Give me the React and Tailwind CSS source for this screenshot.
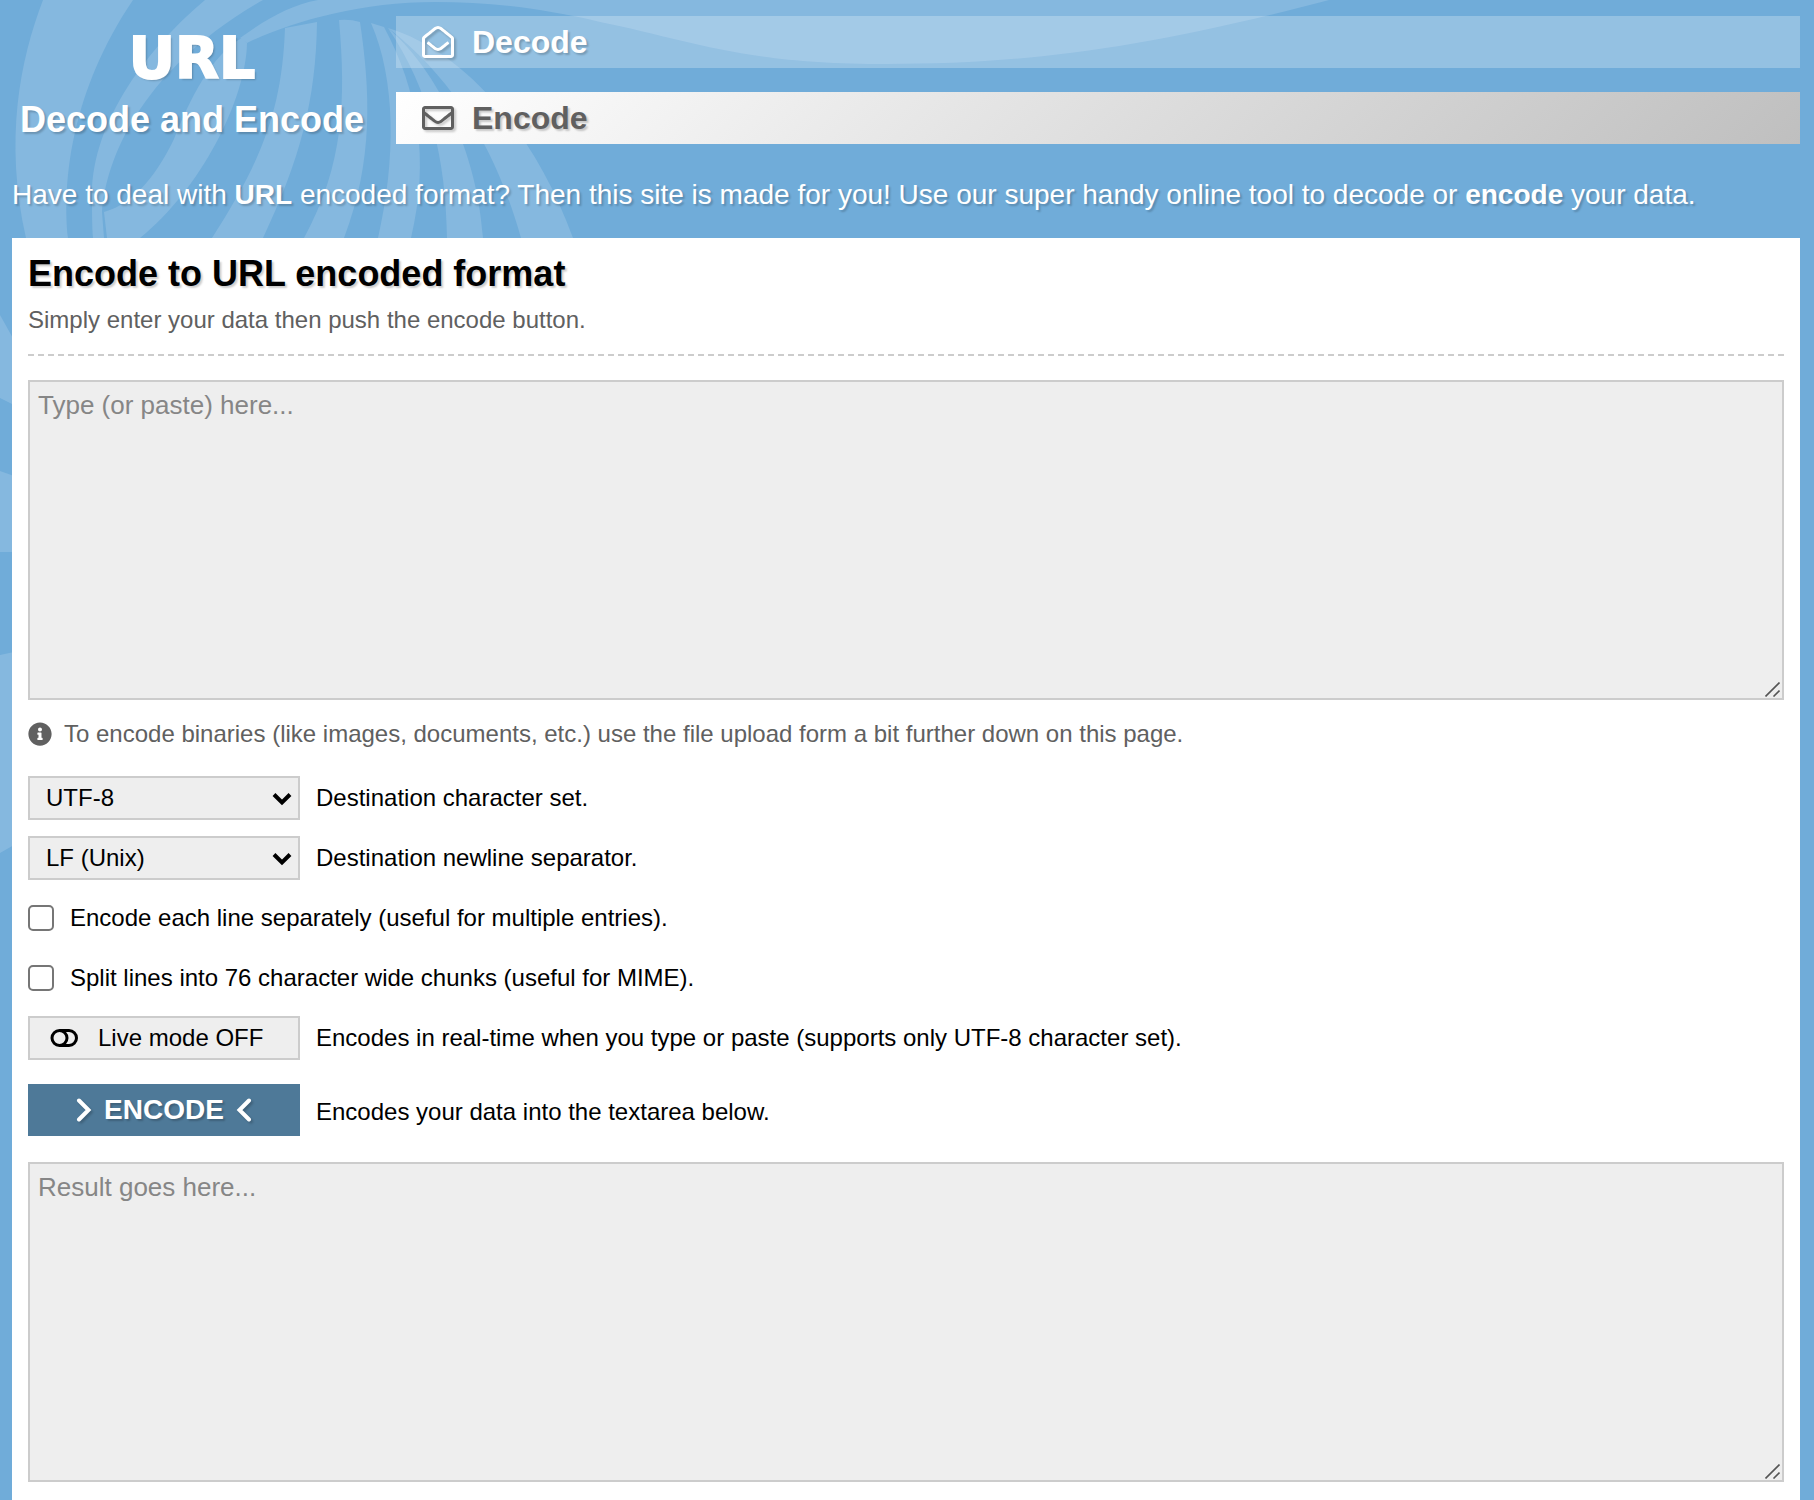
import React, { useState } from "react";
import { FaInfoCircle, FaRegEnvelope, FaRegEnvelopeOpen } from "react-icons/fa";

/* ---------- Fondo decorativo ---------- */
function Swirl() {
  return (
    <svg
      className="pointer-events-none absolute left-0 top-0 -z-10"
      width="1400"
      height="860"
      viewBox="0 0 1400 860"
      fill="#85b8df"
      aria-hidden="true"
    >
      <path d="M43 0C20 60 4 140 26 238H68C62 180 72 90 133 0Z" />
      <path d="M205 0C150 46 92 120 92 195C92 212 92 226 93 238H104L102 212C106 160 140 70 263 0Z" />
      <path d="M104 212C136 203 158 172 174 139C189 101 212 54 242 38L247 43C246 100 200 190 140 238H107Z" />
      <path d="M240 38C265 20 290 5 318 0H1329C1140 50 1020 64 887 64C740 64 690 40 600 22C540 8 490 2 435 2C360 2 290 22 247 43Z" />
      <path d="M285 28L317 22C316 100 300 160 263 238H212C262 160 282 110 285 28Z" />
      <path d="M339 20Q350 19 360 22C370 90 374 160 344 238H304C344 165 346 100 339 20Z" />
      <path d="M371 23L384 27C418 90 430 160 411 238H378C396 160 396 80 371 23Z" />
      <path d="M388 28C430 64 476 140 483 238H447C446 160 430 90 388 28Z" />
      <path d="M388 28C455 48 530 120 573 238H521C496 150 455 80 388 28Z" />
      <path d="M0 315L14 340V405L0 398Z" />
      <path d="M0 471L14 476V552H0Z" />
      <path d="M0 655L14 652V845L0 853Z" />
    </svg>
  );
}

/* ---------- Iconos ---------- */
function ToggleOffIcon() {
  return (
    <svg width="28" height="18" viewBox="0 0 28 18" fill="none" stroke="currentColor" strokeWidth="3" aria-hidden="true">
      <circle cx="9.5" cy="9" r="7.5" />
      <path d="M9.5 1.5H19A7.5 7.5 0 0 1 19 16.5H9.5" />
    </svg>
  );
}

function Chevron({ d }) {
  return (
    <svg
      className="drop-shadow-[2px_2px_1px_rgba(0,0,0,0.2)]"
      width="16"
      height="24"
      viewBox="0 0 16 24"
      fill="none"
      stroke="currentColor"
      strokeWidth="4"
      strokeLinecap="round"
      aria-hidden="true"
    >
      <path d={d} />
    </svg>
  );
}

/* ---------- Controles ---------- */
function TextBox({ id, label, placeholder, value, onChange, readOnly }) {
  return (
    <div className="relative">
      <textarea
        id={id}
        aria-label={label}
        placeholder={placeholder}
        value={value}
        onChange={onChange}
        readOnly={readOnly}
        className="block h-80 w-full resize-none border-2 border-[#cccccc] bg-[#eeeeee] px-2 py-1 text-[26px] leading-[38px] text-black outline-none placeholder:text-[#868686]"
      />
      <svg
        className="pointer-events-none absolute bottom-[3px] right-1"
        width="15"
        height="15"
        viewBox="0 0 15 15"
        stroke="#555555"
        strokeWidth="1.6"
        aria-hidden="true"
      >
        <path d="M0.5 14.5L14.5 0.5M8.5 14.5L14.5 8.5" />
      </svg>
    </div>
  );
}

function SelectRow({ id, options, children }) {
  return (
    <div className="flex items-center gap-4">
      <div className="relative w-[272px]">
        <select
          id={id}
          className="h-11 w-full appearance-none border-2 border-[#cccccc] bg-[#eeeeee] px-4 text-2xl leading-8 text-black outline-none"
        >
          {options.map((o) => (
            <option key={o}>{o}</option>
          ))}
        </select>
        <svg
          className="pointer-events-none absolute right-2 top-4"
          width="20"
          height="14"
          viewBox="0 0 20 14"
          fill="none"
          stroke="#000000"
          strokeWidth="4"
          aria-hidden="true"
        >
          <path d="M2 2.5L10 10.5L18 2.5" />
        </svg>
      </div>
      <label htmlFor={id}>{children}</label>
    </div>
  );
}

function CheckRow({ id, children }) {
  return (
    <div className="flex h-11 items-center gap-4">
      <input
        id={id}
        type="checkbox"
        className="size-[26px] appearance-none rounded-[5px] border-2 border-[#767676] bg-white checked:bg-[#4e7998]"
      />
      <label htmlFor={id}>{children}</label>
    </div>
  );
}

/* ------------------------ Página ------------------------ */
export default function App() {
  const [text, setText] = useState("");
  const [result, setResult] = useState("");
  const [live, setLive] = useState(false);

  const onType = (e) => {
    setText(e.target.value);
    if (live) setResult(encodeURIComponent(e.target.value));
  };

  return (
    <div
      className="relative isolate flex min-h-screen flex-col overflow-hidden bg-[#70acd9] pl-3 pr-3.5 pt-4 text-2xl leading-8 text-black"
      style={{ fontFamily: "'Liberation Sans', Arial, sans-serif" }}
    >
      <Swirl />

      <header className="flex gap-6 text-white">
        <a
          href="#"
          className="flex w-[360px] shrink-0 flex-col items-center gap-3.5 pt-3.5 [text-shadow:2px_2px_2px_rgba(0,0,0,0.2)]"
        >
          <span
            className="text-[57px] font-bold leading-[56px] [-webkit-text-stroke:2px_#ffffff]"
            style={{ fontFamily: "'DejaVu Sans', sans-serif" }}
          >
            URL
          </span>
          <span className="text-4xl font-bold leading-10">Decode and Encode</span>
        </a>

        <nav className="flex grow flex-col gap-6 text-[32px] font-bold [text-shadow:2px_2px_2px_rgba(0,0,0,0.2)]">
          <a href="#decode" className="flex h-[52px] items-center gap-[18px] bg-white/25 px-[26px]">
            <FaRegEnvelopeOpen className="size-8 drop-shadow-[2px_2px_1px_rgba(0,0,0,0.2)]" />
            Decode
          </a>
          <a
            href="#encode"
            className="flex h-[52px] items-center gap-[18px] bg-[linear-gradient(135deg,#ffffff,#bfbfbf)] px-[26px] text-[#606060]"
          >
            <FaRegEnvelope className="size-8 drop-shadow-[2px_2px_1px_rgba(0,0,0,0.2)]" />
            Encode
          </a>
        </nav>
      </header>

      <p className="mb-[23px] mt-[31px] text-[28px] leading-10 text-white [text-shadow:2px_2px_2px_rgba(0,0,0,0.2)]">
        Have to deal with <b>URL</b> encoded format? Then this site is made for you! Use our super handy online tool to
        decode or <b>encode</b> your data.
      </p>

      <main className="grow bg-white px-4 pt-4">
        <h1 className="text-4xl font-bold leading-10 [text-shadow:2px_2px_2px_rgba(0,0,0,0.2)]">
          Encode to URL encoded format
        </h1>
        <p className="mt-2.5 border-b-2 border-dashed border-[#cccccc] pb-[18px] text-[#606060]">
          Simply enter your data then push the encode button.
        </p>

        <form className="mt-6" onSubmit={(e) => e.preventDefault()}>
          <TextBox id="input" label="Data to encode" placeholder="Type (or paste) here..." value={text} onChange={onType} />

          <p className="mb-6 mt-4 flex items-center gap-3 leading-9 text-[#606060]">
            <FaInfoCircle className="size-6 shrink-0" />
            To encode binaries (like images, documents, etc.) use the file upload form a bit further down on this page.
          </p>

          <div className="flex flex-col gap-4">
            <SelectRow id="charset" options={["UTF-8", "ASCII", "ISO-8859-1", "UTF-16"]}>
              Destination character set.
            </SelectRow>
            <SelectRow id="separator" options={["LF (Unix)", "CRLF (Windows)"]}>
              Destination newline separator.
            </SelectRow>
            <CheckRow id="lines">Encode each line separately (useful for multiple entries).</CheckRow>
            <CheckRow id="chunks">Split lines into 76 character wide chunks (useful for MIME).</CheckRow>
            <div className="flex items-center gap-4">
              <button
                id="live"
                type="button"
                onClick={() => setLive(!live)}
                className="flex h-11 w-[272px] items-center gap-5 border-2 border-[#cccccc] bg-[#eeeeee] px-5"
              >
                <ToggleOffIcon />
                {live ? "Live mode ON" : "Live mode OFF"}
              </button>
              <label htmlFor="live">
                Encodes in real-time when you type or paste (supports only UTF-8 character set).
              </label>
            </div>
          </div>

          <div className="mb-[26px] mt-6 flex items-end gap-4">
            <button
              id="submit"
              type="submit"
              onClick={() => setResult(encodeURIComponent(text))}
              className="flex h-[52px] w-[272px] items-center justify-center gap-3 bg-[#4e7998] text-[28px] font-bold text-white [text-shadow:2px_2px_2px_rgba(0,0,0,0.2)]"
            >
              <Chevron d="M3 2.5L12.5 12L3 21.5" />
              ENCODE
              <Chevron d="M13 2.5L3.5 12L13 21.5" />
            </button>
            <label htmlFor="submit" className="leading-12">
              Encodes your data into the textarea below.
            </label>
          </div>

          <TextBox id="output" label="Result" placeholder="Result goes here..." value={result} readOnly />
        </form>
        <div className="h-4" />
      </main>
    </div>
  );
}
